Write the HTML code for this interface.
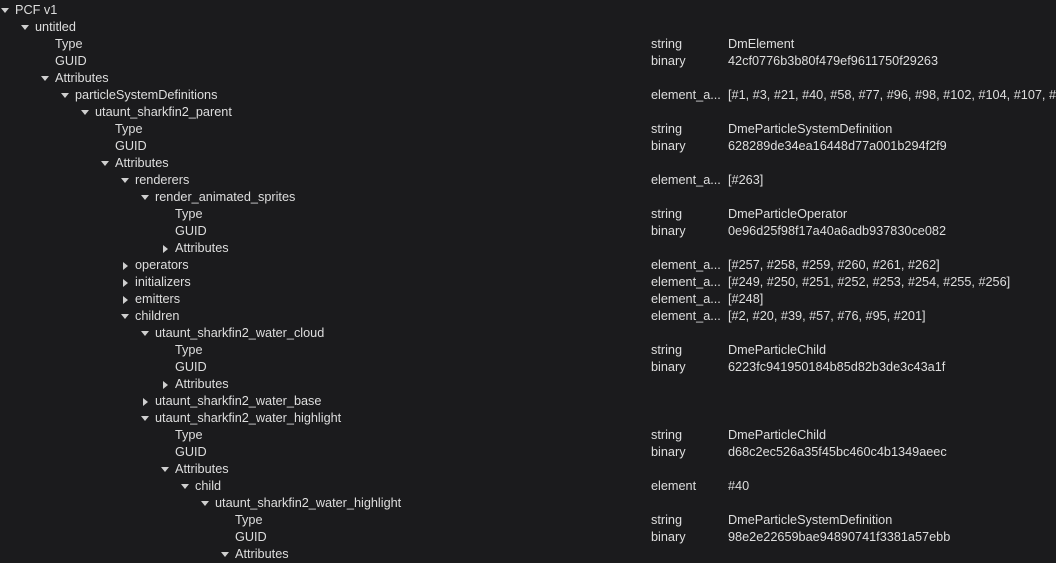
<!DOCTYPE html><html><head><style>
body{margin:0;background:#1b1b1d;width:1056px;height:563px;overflow:hidden;font-family:"Liberation Sans",sans-serif;font-size:12.7px;color:#dedede}
.r{position:absolute;left:0;height:17px;line-height:17px;white-space:nowrap;width:1056px}
.t{position:absolute}
.a{position:absolute;top:6px;width:0;height:0}
.o{border-left:4px solid transparent;border-right:4px solid transparent;border-top:5px solid #cfcfcf}
.c{border-top:4px solid transparent;border-bottom:4px solid transparent;border-left:5px solid #cfcfcf;top:5px}
</style></head><body><div id="w"></div>
<script>
const rows=[[0,"PCF v1","o"],[1,"untitled","o"],[2,"Type","","string","DmElement"],[2,"GUID","","binary","42cf0776b3b80f479ef9611750f29263"],[2,"Attributes","o"],[3,"particleSystemDefinitions","o","element_a...","[#1, #3, #21, #40, #58, #77, #96, #98, #102, #104, #107, #1"],[4,"utaunt_sharkfin2_parent","o"],[5,"Type","","string","DmeParticleSystemDefinition"],[5,"GUID","","binary","628289de34ea16448d77a001b294f2f9"],[5,"Attributes","o"],[6,"renderers","o","element_a...","[#263]"],[7,"render_animated_sprites","o"],[8,"Type","","string","DmeParticleOperator"],[8,"GUID","","binary","0e96d25f98f17a40a6adb937830ce082"],[8,"Attributes","c"],[6,"operators","c","element_a...","[#257, #258, #259, #260, #261, #262]"],[6,"initializers","c","element_a...","[#249, #250, #251, #252, #253, #254, #255, #256]"],[6,"emitters","c","element_a...","[#248]"],[6,"children","o","element_a...","[#2, #20, #39, #57, #76, #95, #201]"],[7,"utaunt_sharkfin2_water_cloud","o"],[8,"Type","","string","DmeParticleChild"],[8,"GUID","","binary","6223fc941950184b85d82b3de3c43a1f"],[8,"Attributes","c"],[7,"utaunt_sharkfin2_water_base","c"],[7,"utaunt_sharkfin2_water_highlight","o"],[8,"Type","","string","DmeParticleChild"],[8,"GUID","","binary","d68c2ec526a35f45bc460c4b1349aeec"],[8,"Attributes","o"],[9,"child","o","element","#40"],[10,"utaunt_sharkfin2_water_highlight","o"],[11,"Type","","string","DmeParticleSystemDefinition"],[11,"GUID","","binary","98e2e22659bae94890741f3381a57ebb"],[11,"Attributes","o"]];
let h="";rows.forEach((r,i)=>{const x=15+20*r[0];h+=`<div class="r" style="top:${17*i+1.5}px">`;if(r[2])h+=`<div class="a ${r[2]}" style="left:${x-(r[2]=="o"?14:12)}px"></div>`;h+=`<span class="t" style="left:${x}px">${r[1]}</span>`;if(r[3])h+=`<span class="t" style="left:651px">${r[3]}</span><span class="t" style="left:728px">${r[4]}</span>`;h+="</div>"});document.getElementById("w").innerHTML=h;
</script></body></html>
